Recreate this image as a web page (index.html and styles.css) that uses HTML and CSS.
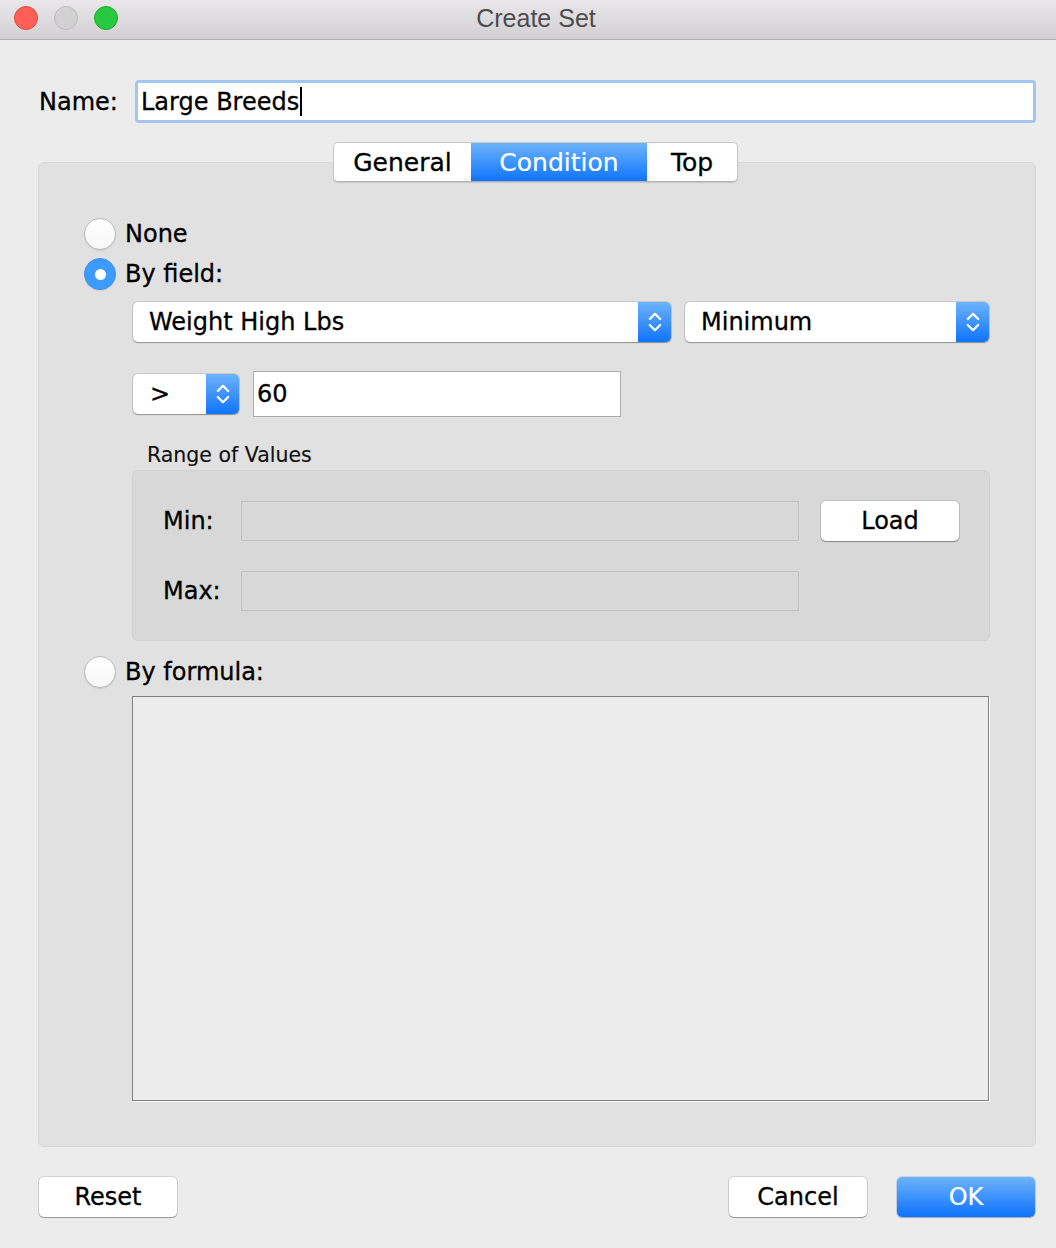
FILE: index.html
```html
<!DOCTYPE html>
<html>
<head>
<meta charset="utf-8">
<link rel="stylesheet" href="styles.css">
</head>
<body>
<div class="window">
  <div class="titlebar">
    <div class="lights">
      <span class="light red"></span>
      <span class="light gray"></span>
      <span class="light green"></span>
    </div>
    <div class="title">Create Set</div>
    <div></div>
  </div>

  <div class="name-row">
    <span class="lbl name-lbl">Name:</span>
    <div class="name-input"><span>Large Breeds</span><span class="caret"></span></div>
  </div>

  <div class="tabs-wrap">
    <div class="tabs">
      <div class="tab tab-general">General</div>
      <div class="tab tab-condition active">Condition</div>
      <div class="tab tab-top">Top</div>
    </div>
  </div>

  <div class="panel">
    <div class="radio-row">
      <span class="radio"></span><span class="lbl">None</span>
    </div>
    <div class="radio-row row-field">
      <span class="radio checked"></span><span class="lbl">By field:</span>
    </div>

    <div class="indent">
      <div class="select-row">
        <div class="select sel-field">
          <span class="sel-text">Weight High Lbs</span>
          <span class="sel-arrow"><svg width="16" height="26" viewBox="0 0 16 26"><path d="M2.8 10 L8 4.8 L13.2 10 M2.8 16 L8 21.2 L13.2 16" fill="none" stroke="#fff" stroke-width="2.2" stroke-linecap="round" stroke-linejoin="round"/></svg></span>
        </div>
        <div class="select sel-agg">
          <span class="sel-text">Minimum</span>
          <span class="sel-arrow"><svg width="16" height="26" viewBox="0 0 16 26"><path d="M2.8 10 L8 4.8 L13.2 10 M2.8 16 L8 21.2 L13.2 16" fill="none" stroke="#fff" stroke-width="2.2" stroke-linecap="round" stroke-linejoin="round"/></svg></span>
        </div>
      </div>

      <div class="op-row">
        <div class="select sel-op">
          <span class="sel-text">&gt;</span>
          <span class="sel-arrow"><svg width="16" height="26" viewBox="0 0 16 26"><path d="M2.8 10 L8 4.8 L13.2 10 M2.8 16 L8 21.2 L13.2 16" fill="none" stroke="#fff" stroke-width="2.2" stroke-linecap="round" stroke-linejoin="round"/></svg></span>
        </div>
        <div class="value-input">60</div>
      </div>

      <div class="range-lbl">Range of Values</div>
      <div class="group">
        <div class="group-row">
          <span class="lbl group-lbl">Min:</span>
          <div class="disabled-input"></div>
          <div class="btn load-btn">Load</div>
        </div>
        <div class="group-row row-max">
          <span class="lbl group-lbl">Max:</span>
          <div class="disabled-input"></div>
        </div>
      </div>
    </div>

    <div class="radio-row row-formula">
      <span class="radio"></span><span class="lbl">By formula:</span>
    </div>
    <div class="indent">
      <div class="formula"></div>
    </div>
  </div>

  <div class="footer">
    <div class="btn">Reset</div>
    <div class="footer-right">
      <div class="btn">Cancel</div>
      <div class="btn primary">OK</div>
    </div>
  </div>
</div>
</body>
</html>
```

FILE: styles.css
```css
* { box-sizing: border-box; }

html, body {
  margin: 0;
  padding: 0;
}

body {
  width: 1056px;
  height: 1248px;
  background: #ececec;
  font-family: "DejaVu Sans", "Noto Sans", sans-serif;
  font-size: 24px;
  color: #000;
  overflow: hidden;
  -webkit-text-stroke: 0.3px currentColor;
}

.window {
  width: 1056px;
  height: 1248px;
  background: #ececec;
}

/* Title bar */
.titlebar {
  height: 40px;
  background: linear-gradient(#e9e7e9, #d2d0d2);
  border-bottom: 1px solid #b3b1b3;
  display: grid;
  grid-template-columns: 1fr auto 1fr;
  align-items: center;
}

.lights {
  display: flex;
  gap: 16px;
  padding-left: 14px;
  padding-bottom: 3px;
}

.light {
  width: 24px;
  height: 24px;
  border-radius: 50%;
  display: block;
}

.light.red { background: #fe5f57; border: 1px solid #e2463f; }
.light.gray { background: #d1d1d1; border: 1px solid #bcbcbc; }
.light.green { background: #28c840; border: 1px solid #1dad2b; }

.title {
  font-family: "Liberation Sans", Arial, sans-serif;
  font-size: 25px;
  color: #4d4d4d;
  margin-left: 16px;
  padding-bottom: 2px;
  -webkit-text-stroke: 0;
}

/* Name row */
.name-row {
  display: flex;
  align-items: center;
  padding: 40px 20px 0 39px;
  gap: 18px;
}

.name-lbl {
  width: 78px;
}

.name-input {
  flex: 1;
  height: 43px;
  background: #fff;
  border: 3px solid #a3c6f1;
  border-radius: 4px;
  padding-left: 3px;
  display: flex;
  align-items: center;
}

.caret {
  display: inline-block;
  width: 2px;
  height: 29px;
  background: #000;
  margin-left: 1px;
}

/* Tabs */
.tabs-wrap {
  margin-top: 19px;
  margin-bottom: -20px;
  padding: 0 20px 0 38px;
  display: flex;
  justify-content: center;
  position: relative;
  z-index: 1;
}

.tabs {
  display: flex;
  height: 40px;
  background: #fff;
  border: 1px solid #c8c8c8;
  border-bottom-color: #b0b0b0;
  border-radius: 5px;
  box-shadow: 0 1px 1px rgba(0, 0, 0, 0.12);
  overflow: hidden;
  margin-left: -3px;
}

.tab {
  display: flex;
  align-items: center;
  justify-content: center;
  height: 100%;
  font-size: 25px;
}

.tab-general { width: 137px; }
.tab-condition { width: 176px; }
.tab-top { width: 90px; }

.tab.active {
  background: linear-gradient(#6cb4fb, #0e74fe);
  color: #fff;
  -webkit-text-stroke: 0.2px #fff;
}

/* Panel */
.panel {
  margin: 0 20px 0 38px;
  height: 985px;
  background: #e1e1e1;
  border: 1px solid #d8d8d8;
  border-radius: 6px;
  padding: 55px 45px 0 45px;
}

.radio-row {
  display: flex;
  align-items: center;
  height: 32px;
  gap: 9px;
}

.row-field { margin-top: 8px; }
.row-formula { margin-top: 15px; }

.radio {
  width: 32px;
  height: 32px;
  border-radius: 50%;
  background: linear-gradient(#ffffff, #f7f7f7);
  border: 1px solid #b9b9b9;
  box-shadow: 0 1px 1px rgba(0, 0, 0, 0.1);
  position: relative;
  flex: none;
}

.radio.checked {
  background: #3d9bfd;
  border-color: #3a95f5;
  display: flex;
  align-items: center;
  justify-content: center;
}

.radio.checked::after {
  content: "";
  width: 11px;
  height: 11px;
  border-radius: 50%;
  background: #fff;
}

.indent {
  margin-left: 48px;
}

/* Selects */
.select-row {
  display: flex;
  gap: 14px;
  margin-top: 12px;
  padding-left: 1px;
}

.select {
  height: 40px;
  background: #fff;
  border-radius: 5px;
  box-shadow: 0 0 0 1px rgba(0, 0, 0, 0.11), 0 1px 1px rgba(0, 0, 0, 0.28);
  display: flex;
  align-items: center;
  overflow: hidden;
}

.sel-text {
  flex: 1;
  padding-left: 16px;
}

.sel-arrow {
  width: 33px;
  height: 100%;
  background: linear-gradient(#6cb2fb, #0f74fe);
  display: flex;
  align-items: center;
  justify-content: center;
}

.sel-field { width: 538px; }
.sel-agg { width: 304px; }
.sel-op { width: 106px; }
.sel-op .sel-text { padding-left: 17px; }

.op-row {
  display: flex;
  align-items: center;
  gap: 14px;
  margin-top: 29px;
  padding-left: 1px;
}

.value-input {
  width: 368px;
  height: 46px;
  background: #fff;
  border: 1px solid #ababab;
  display: flex;
  align-items: center;
  padding-left: 3px;
}

.range-lbl {
  font-size: 20.5px;
  height: 24px;
  line-height: 24px;
  margin-top: 26px;
  padding-left: 15px;
  color: #111;
  -webkit-text-stroke: 0.15px currentColor;
}

.group {
  margin-top: 3px;
  width: 858px;
  height: 171px;
  background: #d8d8d8;
  border: 1px solid #d1d1d1;
  border-radius: 6px;
  padding: 30px 30px 0 30px;
}

.group-row {
  display: flex;
  align-items: center;
  height: 40px;
}

.row-max { margin-top: 30px; }

.group-lbl { width: 78px; }

.disabled-input {
  width: 558px;
  height: 40px;
  border: 1px solid #c3c3c3;
  background: #d8d8d8;
}

.btn {
  width: 138px;
  height: 40px;
  background: #fff;
  border-radius: 5px;
  box-shadow: 0 0 0 1px rgba(0, 0, 0, 0.11), 0 1px 1px rgba(0, 0, 0, 0.3);
  display: flex;
  align-items: center;
  justify-content: center;
}

.load-btn { margin-left: 22px; }

.formula {
  margin-top: 8px;
  width: 857px;
  height: 405px;
  background: #ececec;
  border: 1px solid #808080;
  box-shadow: 1px 1px 0 #ffffff;
}

/* Footer */
.footer {
  margin-top: 30px;
  padding: 0 21px 0 39px;
  display: flex;
  justify-content: space-between;
}

.footer-right {
  display: flex;
  gap: 30px;
}

.btn.primary {
  background: linear-gradient(#6cb3fb, #0e72fe);
  color: #fff;
  box-shadow: 0 0 0 1px rgba(0, 80, 200, 0.15), 0 1px 1px rgba(0, 0, 0, 0.2);
  -webkit-text-stroke: 0.2px #fff;
}
```
